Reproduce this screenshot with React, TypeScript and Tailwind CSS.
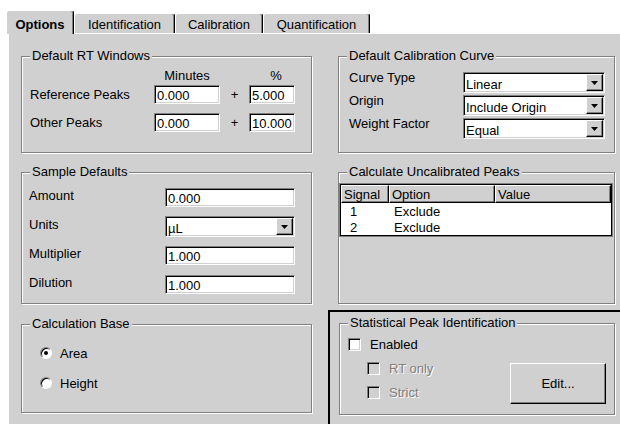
import type { ReactNode } from "react";

// 3D bevels used all over the dialog
const sunken =
  "bg-white border border-t-[#808080] border-l-[#808080] border-r-white border-b-white shadow-[inset_1px_1px_0_#000,inset_-1px_-1px_0_#d0d0d0]";
const raised =
  "bg-[#d0d0d0] border border-t-white border-l-white border-r-black border-b-black shadow-[inset_-1px_-1px_0_#808080]";

const Group = ({
  title,
  className,
  children,
}: {
  title: string;
  className: string;
  children?: ReactNode;
}) => (
  <div
    className={`relative shrink-0 border border-[#808080] shadow-[1px_1px_0_#fff,inset_1px_1px_0_#fff] ${className}`}
  >
    <span className="absolute left-[8px] -top-[9px] whitespace-nowrap bg-[#d0d0d0] px-[2px] leading-[15px]">
      {title}
    </span>
    {children}
  </div>
);

const TextBox = ({ value, className }: { value: string; className: string }) => (
  <div className={`${sunken} flex h-[19px] items-center pl-[2px] pt-[2px] ${className}`}>
    {value}
  </div>
);

const ArrowDown = () => (
  <svg width="7" height="4" viewBox="0 0 7 4">
    <path d="M0 0h7L3.5 4z" fill="#000" />
  </svg>
);

const Select = ({ value, className }: { value: string; className: string }) => (
  <div className={`${sunken} flex h-[21px] p-[1px] ${className}`}>
    <span className="flex-1 pl-[1px] pt-[3px]">{value}</span>
    <div className={`${raised} flex w-[17px] items-center justify-center`}>
      <ArrowDown />
    </div>
  </div>
);

const Check = ({ label, disabled }: { label: string; disabled?: boolean }) => (
  <div className="flex h-[13px] items-center gap-[9px]">
    <div
      className={`h-[13px] w-[13px] border border-t-[#808080] border-l-[#808080] border-r-white border-b-white shadow-[inset_1px_1px_0_#000,inset_-1px_-1px_0_#d0d0d0] ${
        disabled ? "bg-[#d0d0d0]" : "bg-white"
      }`}
    />
    <span className={disabled ? "text-[#808080] [text-shadow:1px_1px_0_#fff]" : ""}>
      {label}
    </span>
  </div>
);

const Radio = ({ label, checked }: { label: string; checked?: boolean }) => (
  <div className="flex h-[16px] items-center gap-[8px]">
    <div className="flex h-[12px] w-[12px] items-center justify-center rounded-full border border-t-[#808080] border-l-[#808080] border-r-white border-b-white bg-white shadow-[inset_1px_1px_0_#000]">
      {checked && <div className="h-[4px] w-[4px] rounded-full bg-black" />}
    </div>
    <span>{label}</span>
  </div>
);

const Tab = ({ label, width }: { label: string; width: string }) => (
  <div
    className={`flex h-[20px] justify-center rounded-t-[3px] border-l border-t border-r border-l-white border-t-white border-r-black bg-[#d0d0d0] pt-[3px] shadow-[inset_-1px_0_0_#808080] ${width}`}
  >
    {label}
  </div>
);

const rtRows = [
  { label: "Reference Peaks", minutes: "0.000", pct: "5.000" },
  { label: "Other Peaks", minutes: "0.000", pct: "10.000" },
];

const curveRows = [
  { label: "Curve Type", value: "Linear" },
  { label: "Origin", value: "Include Origin" },
  { label: "Weight Factor", value: "Equal" },
];

const peaks = [
  { signal: "1", option: "Exclude" },
  { signal: "2", option: "Exclude" },
];

export default function App() {
  return (
    <div className="h-[424px] w-[620px] overflow-hidden bg-white font-['Liberation_Sans',Arial,sans-serif] text-[13px] leading-[15px] text-black">
      {/* tab strip */}
      <div className="relative z-10 flex h-[33px] items-end pl-[6px]">
        <div className="mb-[-1px] flex h-[24px] w-[68px] justify-center rounded-t-[3px] border-l border-t border-r border-l-white border-t-white border-r-black bg-[#d0d0d0] pt-[6px] font-bold shadow-[inset_-1px_0_0_#808080]">
          Options
        </div>
        <Tab label="Identification" width="w-[101px]" />
        <Tab label="Calibration" width="w-[88px]" />
        <Tab label="Quantification" width="w-[107px]" />
      </div>

      {/* page */}
      <div className="ml-[8px] flex h-[391px] border-l border-t border-white bg-[#d0d0d0] pl-[12px] pt-[22px]">
        <div className="flex w-[291px] shrink-0 flex-col">
          <Group title="Default RT Windows" className="h-[97px]">
            <div className="flex flex-col pl-[8px] pt-[11px]">
              <div className="mb-[2px] flex h-[15px]">
                <div className="w-[124px]" />
                <div className="w-[66px] text-center">Minutes</div>
                <div className="w-[29px]" />
                <div className="w-[46px] pl-[8px] text-center">%</div>
              </div>
              <div className="flex flex-col gap-[9px]">
                {rtRows.map((r) => (
                  <div key={r.label} className="flex h-[19px] items-center">
                    <span className="w-[124px]">{r.label}</span>
                    <TextBox value={r.minutes} className="w-[66px]" />
                    <span className="w-[29px] text-center">+</span>
                    <TextBox value={r.pct} className="w-[46px]" />
                  </div>
                ))}
              </div>
            </div>
          </Group>

          <Group title="Sample Defaults" className="mt-[19px] h-[132px]">
            <div className="flex flex-col gap-[8px] pl-[7px] pt-[14px]">
              <div className="flex h-[21px] items-center">
                <span className="mb-[5px] w-[136px]">Amount</span>
                <TextBox value="0.000" className="w-[130px]" />
              </div>
              <div className="flex h-[21px] items-center">
                <span className="mb-[5px] w-[136px]">Units</span>
                <Select value="µL" className="w-[130px]" />
              </div>
              <div className="flex h-[21px] items-center">
                <span className="mb-[5px] w-[136px]">Multiplier</span>
                <TextBox value="1.000" className="w-[130px]" />
              </div>
              <div className="flex h-[21px] items-center">
                <span className="mb-[5px] w-[136px]">Dilution</span>
                <TextBox value="1.000" className="w-[130px]" />
              </div>
            </div>
          </Group>

          <Group title="Calculation Base" className="mt-[20px] h-[89px]">
            <div className="flex flex-col gap-[14px] pl-[18px] pt-[20px]">
              <Radio label="Area" checked />
              <Radio label="Height" />
            </div>
          </Group>
        </div>

        <div className="ml-[26px] flex w-[277px] shrink-0 flex-col">
          <Group title="Default Calibration Curve" className="h-[97px]">
            <div className="flex flex-col gap-[2px] pl-[10px] pt-[15px]">
              {curveRows.map((r) => (
                <div key={r.label} className="flex h-[21px] items-start">
                  <span className="-mt-[2px] w-[114px]">{r.label}</span>
                  <Select value={r.value} className="w-[142px]" />
                </div>
              ))}
            </div>
          </Group>

          <Group title="Calculate Uncalibrated Peaks" className="mt-[19px] h-[132px]">
            <div className="mt-[10px] h-[54px] w-[274px] border border-[#808080] bg-black p-px">
              <div className="h-full bg-white">
                <div className="flex h-[18px]">
                  <div className={`${raised} w-[48px] pl-[2px] pt-[1px]`}>Signal</div>
                  <div className={`${raised} w-[106px] pl-[2px] pt-[1px]`}>Option</div>
                  <div className={`${raised} flex-1 pl-[2px] pt-[1px]`}>Value</div>
                </div>
                {peaks.map((p) => (
                  <div key={p.signal} className="flex h-[16px] items-center">
                    <span className="w-[48px] pl-[9px]">{p.signal}</span>
                    <span className="pl-[5px]">{p.option}</span>
                  </div>
                ))}
              </div>
            </div>
          </Group>

          {/* focused control frame */}
          <div className="mt-[6px] -ml-[10px] h-[140px] w-[320px] shrink-0 border-2 border-black pl-[9px] pt-[11px]">
            <Group title="Statistical Peak Identification" className="h-[92px] w-[276px]">
              <div className="flex flex-col pl-[8px] pr-[8px] pt-[14px]">
                <Check label="Enabled" />
                <div className="mt-[11px] flex justify-between">
                  <div className="flex flex-col gap-[11px] pl-[19px]">
                    <Check label="RT only" disabled />
                    <Check label="Strict" disabled />
                  </div>
                  <div
                    className={`${raised} mt-[1px] flex h-[41px] w-[96px] items-center justify-center`}
                  >
                    Edit...
                  </div>
                </div>
              </div>
            </Group>
          </div>
        </div>
      </div>
    </div>
  );
}
